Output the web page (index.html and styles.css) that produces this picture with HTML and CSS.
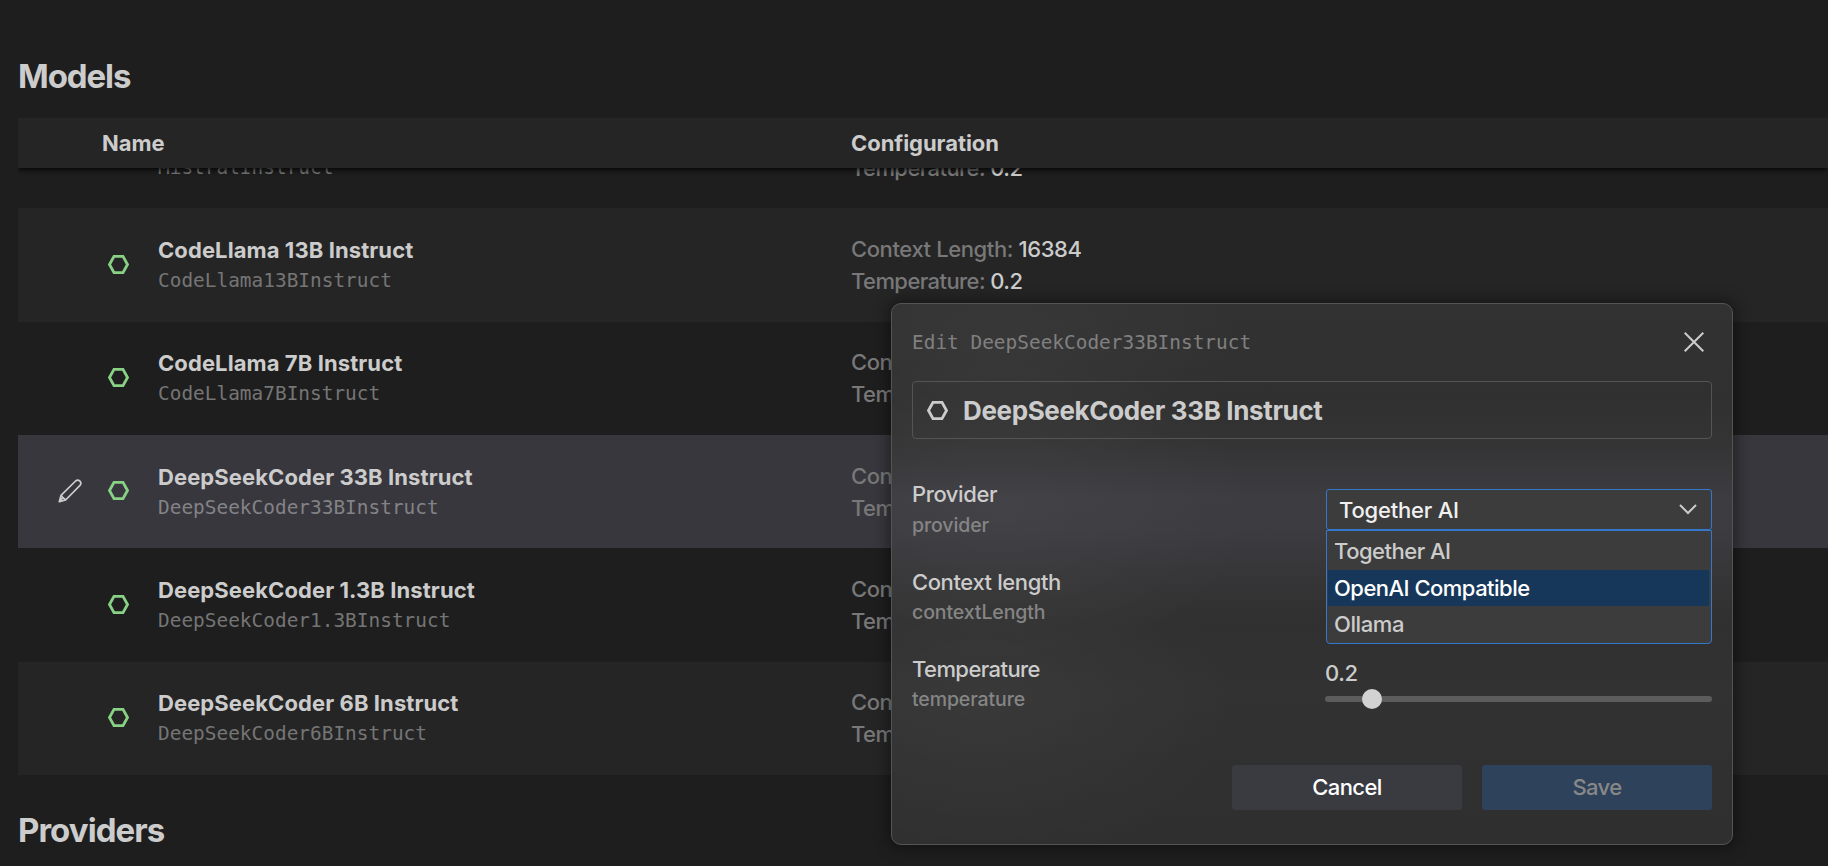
FILE: index.html
```html
<!DOCTYPE html>
<html lang="en">
<head>
<meta charset="utf-8">
<title>Models</title>
<link rel="stylesheet" href="styles.css">
</head>
<body>
<svg width="0" height="0" class="defs">
  <symbol id="hex" viewBox="0 0 21 19"><path d="M6 1.400h9l4.500 8.100-4.500 8.100H6L1.500 9.500z" fill="none" stroke="currentColor" stroke-width="2.800"/></symbol>
</svg>
<main class="page">
  <h1 class="section-title">Models</h1>
  <section class="table">
    <header class="table-head">
      <div class="col-name-head">Name</div>
      <div class="col-config-head">Configuration</div>
    </header>
    <div class="table-body">
      <div class="row">
        <div class="edit"></div>
        <svg class="hex"><use href="#hex"/></svg>
        <div class="names"><div class="name">Mistral Instruct</div><div class="id">MistralInstruct</div></div>
        <div class="col-config"><div><span class="key">Context Length:</span> 4096</div><div class="temp"><span class="key">Temperature:</span> 0.2</div></div>
      </div>
      <div class="row alt">
        <div class="edit"></div>
        <svg class="hex"><use href="#hex"/></svg>
        <div class="names"><div class="name">CodeLlama 13B Instruct</div><div class="id">CodeLlama13BInstruct</div></div>
        <div class="col-config"><div><span class="key">Context Length:</span> 16384</div><div class="temp"><span class="key">Temperature:</span> 0.2</div></div>
      </div>
      <div class="row">
        <div class="edit"></div>
        <svg class="hex"><use href="#hex"/></svg>
        <div class="names"><div class="name">CodeLlama 7B Instruct</div><div class="id">CodeLlama7BInstruct</div></div>
        <div class="col-config"><div><span class="key">Context Length:</span> 16384</div><div class="temp"><span class="key">Temperature:</span> 0.2</div></div>
      </div>
      <div class="row selected">
        <div class="edit"><svg class="pencil" viewBox="0 0 24 24"><path d="M1.300 22.700L3 16.400 17.600 2Q19.800.1 21.900 2.100 23.800 4.200 22 6.400L7.600 21zM3 16.400L5 18.700 7.600 21M5 18.700L1.300 22.700" fill="none" stroke="currentColor" stroke-width="1.700" stroke-linejoin="round"/></svg></div>
        <svg class="hex"><use href="#hex"/></svg>
        <div class="names"><div class="name">DeepSeekCoder 33B Instruct</div><div class="id">DeepSeekCoder33BInstruct</div></div>
        <div class="col-config"><div><span class="key">Context Length:</span> 16384</div><div class="temp"><span class="key">Temperature:</span> 0.2</div></div>
      </div>
      <div class="row">
        <div class="edit"></div>
        <svg class="hex"><use href="#hex"/></svg>
        <div class="names"><div class="name">DeepSeekCoder 1.3B Instruct</div><div class="id">DeepSeekCoder1.3BInstruct</div></div>
        <div class="col-config"><div><span class="key">Context Length:</span> 16384</div><div class="temp"><span class="key">Temperature:</span> 0.2</div></div>
      </div>
      <div class="row alt">
        <div class="edit"></div>
        <svg class="hex"><use href="#hex"/></svg>
        <div class="names"><div class="name">DeepSeekCoder 6B Instruct</div><div class="id">DeepSeekCoder6BInstruct</div></div>
        <div class="col-config"><div><span class="key">Context Length:</span> 16384</div><div class="temp"><span class="key">Temperature:</span> 0.2</div></div>
      </div>
    </div>
  </section>
  <h1 class="section-title providers">Providers</h1>
</main>

<div class="dialog">
  <div class="dialog-head">
    <span class="dialog-caption">Edit DeepSeekCoder33BInstruct</span>
    <svg class="close" viewBox="0 0 20 20"><path d="M.7.7l18.600 18.600M19.300.7L.7 19.300" stroke="currentColor" stroke-width="2"/></svg>
  </div>
  <div class="title-box"><svg class="hex plain"><use href="#hex"/></svg><span class="model-title">DeepSeekCoder 33B Instruct</span></div>
  <div class="fields">
    <div class="field">
      <div class="label"><div class="label-main">Provider</div><div class="label-sub low">provider</div></div>
      <div class="control">
        <div class="select"><span>Together AI</span><svg class="chevron" viewBox="0 0 18 11"><path d="M1 1l8 8 8-8" fill="none" stroke="currentColor" stroke-width="2"/></svg></div>
        <div class="menu">
          <div class="option first">Together AI</div>
          <div class="option active">OpenAI Compatible</div>
          <div class="option">Ollama</div>
        </div>
      </div>
    </div>
    <div class="field">
      <div class="label"><div class="label-main">Context length</div><div class="label-sub">contextLength</div></div>
    </div>
    <div class="field">
      <div class="label"><div class="label-main temp">Temperature</div><div class="label-sub">temperature</div></div>
      <div class="control">
        <div class="slider-value">0.2</div>
        <div class="slider"><div class="thumb"></div></div>
      </div>
    </div>
  </div>
  <div class="actions">
    <div class="button cancel">Cancel</div>
    <div class="button save">Save</div>
  </div>
</div>
</body>
</html>
```
FILE: styles.css
```css
* { box-sizing: border-box; }
body { margin: 0; width: 1828px; height: 866px; overflow: hidden; position: relative; background: #1e1e1e; color: #ccc; font-family: Inter, sans-serif; font-size: 22px; font-weight: 450; letter-spacing: -0.4px; }
.defs { position: absolute; }
.page { padding: 56px 0 0 18px; }
.section-title { margin: 0; font-size: 33px; font-weight: 700; line-height: 40px; letter-spacing: -1.100px; }
.table { margin-top: 22px; }
.table-head { position: relative; z-index: 1; height: 50px; display: flex; align-items: center; background: #252526; font-weight: 700; letter-spacing: -0.050px; line-height: 32px; box-shadow: 0 2px 5px rgba(0, 0, 0, .8); clip-path: inset(0 0 -8px 0); }
.col-name-head { width: 833px; padding-left: 84px; }
.table-body { height: 607px; overflow: hidden; display: flex; flex-direction: column; justify-content: flex-end; }
.row { flex: 0 0 113.330px; display: flex; align-items: center; }
.row .hex, .pencil { margin-bottom: 2px; }
.alt { background: #252526; }
.selected { background: #38373d; }
.edit { width: 90px; padding-left: 40px; display: flex; }
.pencil { width: 24px; height: 24px; }
.hex { width: 21px; height: 19px; color: #89d185; }
.names { width: 722px; padding-left: 29px; line-height: 30px; }
.name { font-weight: 700; letter-spacing: 0.090px; }
.id, .dialog-caption { font-family: "DejaVu Sans Mono", monospace; font-size: 19.4px; letter-spacing: 0.020px; color: #757575; }
.id { padding-top: 1px; margin-bottom: -1px; }
.selected .id { color: #838387; }
.col-config { line-height: 32px; }
.temp { letter-spacing: -0.580px; }
.key { color: #787878; }
.providers { margin-top: 35px; letter-spacing: -0.950px; }

.dialog {
  position: absolute; left: 891px; top: 303px; width: 842px; height: 542px; padding: 20px 20px 0;
  border: 1px solid #545454; border-radius: 10px;
  background:
    radial-gradient(ellipse 250px 130px at 110px 40px, rgba(255, 255, 255, .03), transparent),
    radial-gradient(ellipse 260px 160px at 110px 205px, rgba(255, 255, 255, .03), transparent),
    radial-gradient(ellipse 260px 170px at 90px 400px, rgba(255, 255, 255, .035), transparent),
    linear-gradient(#323232 0, #303030 17%, #343435 26%, #3d3c41 36%, #3c3b40 42%, #363638 50%, #303030 59%, #323232 72%, #303031 86%, #2f2f2f 100%);
  box-shadow: 0 0 16px 2px rgba(0, 0, 0, .45);
}
.dialog-head { height: 35px; display: flex; align-items: center; justify-content: space-between; }
.dialog-caption { color: #808080; padding-top: 1px; }
.close { width: 20px; height: 20px; margin-right: 8px; }
.title-box { height: 58px; margin-top: 22px; padding-left: 14px; border: 1px solid #545454; border-radius: 4px; display: flex; align-items: center; gap: 15px; }
.plain { color: #ccc; }
.model-title { font-size: 26px; font-weight: 700; letter-spacing: -0.370px; }
.fields { height: 262px; margin-top: 40px; display: flex; flex-direction: column; }
.field { height: 87.500px; display: flex; justify-content: space-between; }
.label { line-height: 30px; }
.label-sub { font-size: 19.500px; letter-spacing: -0.100px; color: #858585; }
.low { padding-top: 1px; }
.control { width: 386px; padding-top: 10px; }
.select { height: 41px; padding: 0 14px 0 12px; display: flex; align-items: center; justify-content: space-between; border: 1px solid #3478cc; border-radius: 3px; background: #3c3c3c; color: #f0f0f0; letter-spacing: -0.200px; }
.chevron { width: 18px; height: 11px; color: #ccc; }
.menu { position: relative; z-index: 2; height: 114px; padding: 3px 2px 0 1px; border: 1px solid #3478cc; border-radius: 0 0 4px 4px; background: #3c3c3c; }
.option { height: 36px; line-height: 36px; padding-left: 6px; }
.first { line-height: 34px; letter-spacing: -0.500px; }
.active { background: #17375a; color: #fff; letter-spacing: -0.520px; }
.slider-value { line-height: 24px; margin-top: -3px; margin-left: -1px; }
.slider { height: 6px; margin: 11px 0 0 -1px; display: flex; align-items: center; border-radius: 3px; background: #5c5c5c; }
.thumb { width: 20px; height: 20px; margin-left: 37px; border-radius: 50%; background: #d2d2d2; }
.actions { margin-top: 24px; display: flex; justify-content: flex-end; gap: 20px; }
.button { width: 230px; height: 45px; line-height: 45px; border-radius: 3px; text-align: center; letter-spacing: -0.600px; }
.cancel { background: #3a3b40; color: #fff; }
.save { background: #2f425b; color: #888; }
```
